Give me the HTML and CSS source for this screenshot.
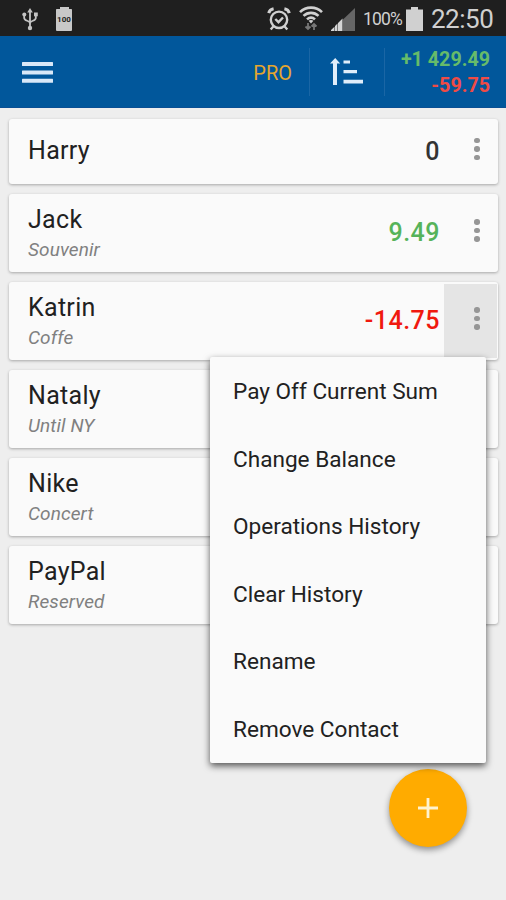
FILE: index.html
```html
<!DOCTYPE html>
<html lang="en">
<head>
    <meta charset="UTF-8">
    <title>Contacts</title>
    <link rel="stylesheet" href="styles.css">
</head>
<body>
    <!-- Status bar -->
    <div class="status-bar">
        <div class="status-left">
            <svg class="icon-usb" width="16" height="23" viewBox="0 0 16 23" fill="none" stroke="#c4c4c4" stroke-width="1.8">
                <path d="M8 2v18M2.200 6v4c0 3.500 5.800 2 5.800 5.500M13.800 6v4c0 3.500-5.800 2-5.800 5.500"/>
                <path d="M8 0l2.800 4.500H5.200z" fill="#c4c4c4" stroke="none"/>
                <circle cx="2.300" cy="6.500" r="2" fill="#c4c4c4" stroke="none"/>
                <path d="M12 4.500h3.800v3.800H12z" fill="#c4c4c4" stroke="none"/>
                <circle cx="8" cy="20" r="2.200" fill="#c4c4c4" stroke="none"/>
            </svg>
            <div class="battery-full"><span>100</span></div>
        </div>
        <div class="status-right">
            <svg class="icon-alarm" width="24" height="24" viewBox="0 0 24 24" fill="none" stroke="#d0d0d0" stroke-width="2.400">
                <circle cx="12" cy="12.800" r="8.200"/>
                <path d="M8.300 12l3.200 3.200 4.500-4.700"/>
                <path d="M1.700 6.200C2.300 3.800 4 2.300 6.600 1.800M22.300 6.200c-.6-2.400-2.300-3.900-4.900-4.400" stroke-width="3"/>
                <path d="M6.300 19.500l-2.600 3M17.700 19.500l2.600 3"/>
            </svg>
            <svg class="icon-wifi" width="24" height="25" viewBox="0 0 24 25" fill="none" stroke="#d0d0d0" stroke-width="2.600">
                <path d="M1 6.200C7 .1 17 .1 23 6.200M4.500 9.900c4.300-4.100 10.700-4.100 15 0M8 13.400c2.400-2.200 5.600-2.200 8 0"/>
                <path d="M12 17.500l-2.400-2.700c1.500-1.100 3.300-1.100 4.800 0z" fill="#d0d0d0" stroke="none"/>
                <path d="M9 17v6M6.500 20.500L9 23l2.500-2.500M15 24v-6M12.500 20.500L15 18l2.500 2.500" stroke="#777" stroke-width="1.800"/>
            </svg>
            <svg class="icon-signal" width="24" height="23" viewBox="0 0 24 23">
                <path d="M12 11.500L24 0v23H12z" fill="#666"/>
                <path d="M0 23v-1l3.500-3.300V23zM4 23v-5L6.500 15.500V23zM7 23v-8l4.500-4.500V23z" fill="#d5d5d5"/>
            </svg>
            <span class="percent">100%</span>
            <svg class="icon-battery" width="17" height="24" viewBox="0 0 17 24">
                <path d="M5 0h7v2.500h5V24H0V2.500h5z" fill="#d0d0d0"/>
            </svg>
            <span class="clock">22:50</span>
        </div>
    </div>

    <!-- App bar -->
    <header class="app-bar">
        <svg class="menu-icon" width="31" height="21" viewBox="0 0 31 21" fill="#d9e8f8">
            <rect width="31" height="4" rx=".5"/>
            <rect y="8.500" width="31" height="4" rx=".5"/>
            <rect y="16.800" width="31" height="4" rx=".5"/>
        </svg>
        <span class="pro">PRO</span>
        <div class="sort">
            <svg width="34" height="28" viewBox="0 0 34 28" fill="#e0edfa">
                <path d="M5.200 0l5 5.500H7V27H3V5.500H0z"/>
                <path d="M13.500 2.500H20v3h-6.500zM13.500 12H27v3.200H13.500zM13.500 21.800H33v3.600H13.500z"/>
            </svg>
        </div>
        <div class="totals">
            <div class="plus">+1 429.49</div>
            <div class="minus">-59.75</div>
        </div>
    </header>

    <!-- Contacts -->
    <main class="list">
        <div class="card short">
            <div class="info"><div class="name">Harry</div></div>
            <div class="sum">0</div>
            <div class="more"><i></i><i></i><i></i></div>
        </div>
        <div class="card">
            <div class="info"><div class="name">Jack</div><div class="note">Souvenir</div></div>
            <div class="sum green">9.49</div>
            <div class="more"><i></i><i></i><i></i></div>
        </div>
        <div class="card">
            <div class="info"><div class="name">Katrin</div><div class="note">Coffe</div></div>
            <div class="sum red">-14.75</div>
            <div class="more active"><i></i><i></i><i></i></div>

            <!-- Popup menu -->
            <div class="popup">
                <div class="popup-item">Pay Off Current Sum</div>
                <div class="popup-item">Change Balance</div>
                <div class="popup-item">Operations History</div>
                <div class="popup-item">Clear History</div>
                <div class="popup-item">Rename</div>
                <div class="popup-item">Remove Contact</div>
            </div>
        </div>
        <div class="card">
            <div class="info"><div class="name">Nataly</div><div class="note">Until NY</div></div>
        </div>
        <div class="card">
            <div class="info"><div class="name">Nike</div><div class="note">Concert</div></div>
        </div>
        <div class="card">
            <div class="info"><div class="name">PayPal</div><div class="note">Reserved</div></div>
        </div>
    </main>

    <div class="fab">
        <svg width="20" height="20" viewBox="0 0 20 20" stroke="#fff3d0" stroke-width="2.800">
            <path d="M10 0v20M0 10h20"/>
        </svg>
    </div>
</body>
</html>
```

FILE: styles.css
```css
* {
    box-sizing: border-box;
}

body {
    margin: 0;
    height: 900px;
    overflow: hidden;
    background-color: #eeeeee;
    font-family: Roboto, "Liberation Sans", sans-serif;
    color: #212121;
}

/* Status bar */
.status-bar {
    display: flex;
    justify-content: space-between;
    height: 36px;
    padding: 0 13px 0 22px;
    background-color: #1f1f1f;
    color: #d0d0d0;
}

.status-left,
.status-right {
    display: flex;
    align-items: center;
}

.status-right {
    padding-top: 1px;
}

.icon-usb {
    margin-top: 2px;
}

.battery-full {
    width: 16px;
    height: 22px;
    margin: 3px 0 0 18px;
    background-color: #c8c8c8;
    border-radius: 1px;
    border-top: 1px solid #c8c8c8;
    color: #222;
    font-size: 8px;
    font-weight: bold;
    line-height: 21px;
    text-align: center;
}

.battery-full::before {
    content: "";
    display: block;
    width: 9px;
    height: 2px;
    margin: -3px auto 0;
    background-color: #c8c8c8;
}

.icon-wifi {
    margin: 0 8px 0 8px;
}

.icon-signal {
    margin-top: 2px;
}

.percent {
    width: 39px;
    margin: 1px 4px 0 8px;
    font-size: 17.5px;
    letter-spacing: -0.8px;
}

.icon-battery {
    margin-right: 8px;
}

.clock {
    width: 62px;
    font-size: 26px;
    letter-spacing: -0.5px;
}

/* App bar */
.app-bar {
    display: flex;
    align-items: center;
    height: 72px;
    padding: 1px 16px 0 22px;
    background-color: #01579b;
    border-bottom: 1px solid #0a4f94;
}

.menu-icon {
    margin-right: auto;
}

.pro {
    margin-right: 17px;
    padding-top: 1px;
    color: #e5a62e;
    font-size: 20px;
}

.sort {
    display: flex;
    align-items: center;
    width: 76px;
    height: 48px;
    padding-left: 20px;
    border-left: 1px solid #1a66a5;
    border-right: 1px solid #1a66a5;
}

.totals {
    width: 105px;
    padding-top: 2px;
    text-align: right;
    font-size: 19.7px;
    font-weight: 700;
    line-height: 26px;
}

.plus {
    color: #66bb6a;
}

.minus {
    color: #ef4b45;
}

/* Contact cards */
.list {
    display: flex;
    flex-direction: column;
    gap: 10px;
    padding: 10.5px 8px 0 9px;
}

.card {
    position: relative;
    display: flex;
    align-items: center;
    height: 78px;
    padding-left: 19px;
    background-color: #fafafa;
    border-radius: 3px;
    box-shadow: 0 1px 3px rgba(0, 0, 0, 0.3);
}

.card.short {
    height: 65px;
}

.info {
    flex: 1;
    padding-top: 4px;
}

.short .info {
    padding-top: 0;
}

.name {
    font-size: 25px;
    line-height: 30px;
    letter-spacing: 0.3px;
}

.note {
    color: #808080;
    font-size: 19px;
    font-style: italic;
    line-height: 29px;
    letter-spacing: 0.1px;
}

.sum {
    color: #333;
    font-size: 25px;
    font-weight: 500;
    letter-spacing: 0.5px;
}

.sum.green {
    color: #56b35a;
}

.sum.red {
    color: #f0190f;
}

.more {
    display: flex;
    flex-direction: column;
    align-items: center;
    justify-content: center;
    gap: 3px;
    width: 53px;
    height: 74px;
    margin: 0 1px 0 4px;
    padding: 0 0 4px 13px;
}

.more i {
    width: 5.5px;
    height: 5.5px;
    border-radius: 50%;
    background-color: #969696;
}

.more.active {
    background-color: #e5e5e5;
}

/* Popup menu */
.popup {
    position: absolute;
    top: 75.5px;
    right: 12px;
    z-index: 2;
    width: 276px;
    height: 406px;
    background-color: #fafafa;
    border-radius: 2px;
    box-shadow: 0 3px 7px rgba(0, 0, 0, 0.65);
}

.popup-item {
    height: 67.5px;
    padding-left: 23px;
    font-size: 22.6px;
    line-height: 70px;
}

/* Add button */
.fab {
    position: absolute;
    left: 389px;
    top: 769px;
    display: flex;
    align-items: center;
    justify-content: center;
    width: 78px;
    height: 78px;
    border-radius: 50%;
    background-color: #ffab00;
    box-shadow: 0 3px 6px rgba(0, 0, 0, 0.4);
}
```
